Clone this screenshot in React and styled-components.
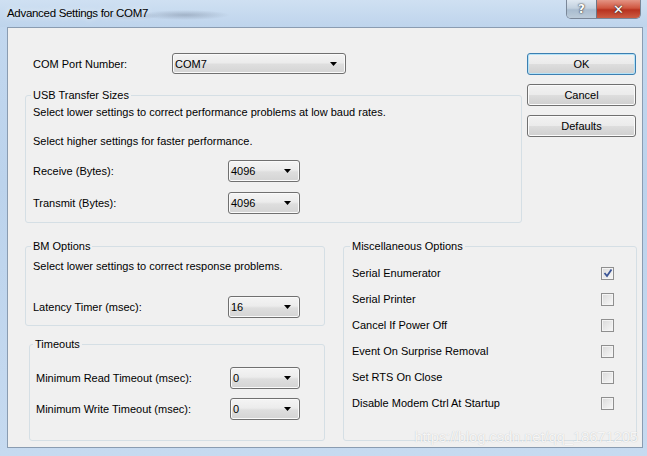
import React from 'react';
import styled, { createGlobalStyle } from 'styled-components';

const GlobalStyle = createGlobalStyle`
  html, body {
    margin: 0;
    padding: 0;
    background: #bdd3ec;
  }
  body {
    font-family: "Liberation Sans", Arial, sans-serif;
    font-size: 11px;
    color: #000;
  }
`;

const Window = styled.div`
  width: 647px;
  height: 456px;
  display: flex;
  flex-direction: column;
  background: linear-gradient(180deg, #c3d8ef 0%, #bcd3ec 40%, #c6daf0 100%);
  overflow: hidden;
`;

const TitleBar = styled.div`
  height: 27px;
  flex: none;
  display: flex;
  align-items: flex-start;
  background:
    radial-gradient(ellipse 45px 5px at 185px 15px, rgba(80, 90, 110, 0.3), transparent),
    radial-gradient(ellipse 30px 4px at 130px 16px, rgba(80, 90, 110, 0.2), transparent),
    linear-gradient(180deg, #cfe0f2 0%, #bed4ec 100%);
`;

const Title = styled.div`
  padding: 6px 0 0 7px;
  font-size: 11.5px;
  letter-spacing: -0.3px;
  line-height: 14px;
  text-shadow: 0 0 6px rgba(255, 255, 255, 0.9);
`;

const CaptionButtons = styled.div`
  margin-left: auto;
  margin-right: 6px;
  display: flex;
  border: 1px solid #7a8798;
  border-top: none;
  border-radius: 0 0 5px 5px;
  overflow: hidden;
`;

const CaptionButton = styled.div`
  width: ${({ $w }) => $w}px;
  height: 18px;
  display: flex;
  align-items: center;
  justify-content: center;
  font-family: "DejaVu Sans", sans-serif;
  font-weight: bold;
  font-size: ${({ $close }) => ($close ? 13 : 12)}px;
  color: #fff;
  text-shadow: 0 0 1px #333, 0 0 2px #333;
  background: ${({ $close }) =>
    $close
      ? 'linear-gradient(180deg, #e49484 0%, #cf5640 45%, #b8321f 55%, #cc5d43 100%)'
      : 'linear-gradient(180deg, #dfe8f1 0%, #c3d1df 45%, #a9bccf 55%, #bccbd9 100%)'};
  & + & {
    border-left: 1px solid #6c7686;
  }
`;

const Client = styled.div`
  position: relative;
  flex: 1;
  margin: 0 4px 8px 7px;
  border: 1px solid #8a9cb1;
  background: #f0f0f0;
  padding: 25px 0 0 17px;
  display: flex;
  flex-direction: column;
`;

const TopSection = styled.div`
  display: flex;
  align-items: flex-start;
`;

const LeftColumn = styled.div`
  width: ${({ $w }) => $w}px;
  display: flex;
  flex-direction: column;
`;

const ButtonColumn = styled.div`
  margin-left: 5px;
  display: flex;
  flex-direction: column;
  gap: 9px;
`;

const Button = styled.div`
  width: 109px;
  height: 22px;
  box-sizing: border-box;
  border: 1px solid ${({ $default }) => ($default ? '#3c7fb1' : '#707070')};
  border-radius: 3px;
  display: flex;
  align-items: center;
  justify-content: center;
  background: linear-gradient(180deg, #f2f2f2 0%, #ebebeb 48%, #dddddd 52%, #cfcfcf 100%);
  box-shadow: inset 0 0 0 1px ${({ $default }) => ($default ? '#b4e2f7' : '#fbfbfb')};
`;

const FieldRow = styled.div`
  display: flex;
  align-items: center;
  height: ${({ $h }) => $h || 22}px;
  margin-top: ${({ $mt }) => $mt || 0}px;
  padding-left: ${({ $pl }) => $pl || 0}px;
`;

const FieldLabel = styled.span`
  width: ${({ $w }) => $w}px;
  flex: none;
`;

const Select = styled.div`
  width: ${({ $w }) => $w}px;
  height: ${({ $h }) => $h || 22}px;
  box-sizing: border-box;
  border: 1px solid #707070;
  border-radius: 3px;
  padding: 0 8px 0 2px;
  display: flex;
  align-items: center;
  justify-content: space-between;
  background: linear-gradient(180deg, #f4f4f4 0%, #ececec 45%, #dedede 55%, #d4d4d4 100%);
  box-shadow: inset 0 0 0 1px #fafafa;
`;

const Group = styled.fieldset`
  margin: ${({ $m }) => $m || '0'};
  width: ${({ $w }) => $w}px;
  box-sizing: border-box;
  border: 1px solid #d5dfe5;
  border-radius: 3px;
  padding: ${({ $p }) => $p};
  display: flex;
  flex-direction: column;
`;

const Legend = styled.legend`
  padding: 0 2px;
  margin-left: ${({ $ml }) => $ml ?? -2}px;
  line-height: 14px;
`;

const Text = styled.div`
  line-height: 14px;
  margin-top: ${({ $mt }) => $mt || 0}px;
`;

const BottomSection = styled.div`
  margin-top: 16px;
  display: flex;
  align-items: flex-start;
`;

const OptionRow = styled.div`
  height: 26px;
  display: flex;
  align-items: center;
  justify-content: space-between;
`;

const CheckBox = styled.div`
  width: 13px;
  height: 13px;
  box-sizing: border-box;
  border: 1px solid #8f8f8f;
  display: flex;
  align-items: center;
  justify-content: center;
  background: linear-gradient(135deg, #d9d9d9 0%, #ececec 60%, #f8f8f8 100%);
  box-shadow: inset 0 0 0 1px #f4f4f4;
`;

const Watermark = styled.div`
  position: absolute;
  right: 4px;
  bottom: 2px;
  font-size: 15px;
  color: rgba(255, 255, 255, 0.85);
  text-shadow: 0 0 1px rgba(0, 0, 0, 0.22);
  letter-spacing: -0.2px;
`;

function Arrow() {
  return (
    <svg width="7" height="4" viewBox="0 0 7 4">
      <path d="M0 0 H7 L3.5 4 Z" fill="#000" />
    </svg>
  );
}

function DropDown({ value, width, height }) {
  return (
    <Select $w={width} $h={height}>
      <span>{value}</span>
      <Arrow />
    </Select>
  );
}

function Check({ checked }) {
  return (
    <CheckBox>
      {checked && (
        <svg width="10" height="10" viewBox="0 0 10 10">
          <path d="M1.5 5 L4 8 L8.5 1.5" fill="none" stroke="#3b5596" strokeWidth="1.8" />
        </svg>
      )}
    </CheckBox>
  );
}

const options = [
  { label: 'Serial Enumerator', checked: true },
  { label: 'Serial Printer' },
  { label: 'Cancel If Power Off' },
  { label: 'Event On Surprise Removal' },
  { label: 'Set RTS On Close' },
  { label: 'Disable Modem Ctrl At Startup' },
];

export default function App() {
  return (
    <>
      <GlobalStyle />
      <Window>
        <TitleBar>
          <Title>Advanced Settings for COM7</Title>
          <CaptionButtons>
            <CaptionButton $w={29}>?</CaptionButton>
            <CaptionButton $w={43} $close>✕</CaptionButton>
          </CaptionButtons>
        </TitleBar>

        <Client>
          <TopSection>
            <LeftColumn $w={497}>
              <FieldRow $h={21} $pl={8}>
                <FieldLabel $w={139}>COM Port Number:</FieldLabel>
                <DropDown value="COM7" width={174} height={21} />
              </FieldRow>

              <Group $w={497} $m="14px 0 0 0" $p="3px 10px 8px 7px">
                <Legend>USB Transfer Sizes</Legend>
                <Text>Select lower settings to correct performance problems at low baud rates.</Text>
                <Text $mt={15}>Select higher settings for faster performance.</Text>
                <FieldRow $mt={12}>
                  <FieldLabel $w={195}>Receive (Bytes):</FieldLabel>
                  <DropDown value="4096" width={72} />
                </FieldRow>
                <FieldRow $mt={10}>
                  <FieldLabel $w={195}>Transmit (Bytes):</FieldLabel>
                  <DropDown value="4096" width={72} />
                </FieldRow>
              </Group>
            </LeftColumn>

            <ButtonColumn>
              <Button $default>OK</Button>
              <Button>Cancel</Button>
              <Button>Defaults</Button>
            </ButtonColumn>
          </TopSection>

          <BottomSection>
            <LeftColumn $w={300}>
              <Group $w={300} $p="6px 10px 7px 7px">
                <Legend>BM Options</Legend>
                <Text>Select lower settings to correct response problems.</Text>
                <FieldRow $mt={23}>
                  <FieldLabel $w={195}>Latency Timer (msec):</FieldLabel>
                  <DropDown value="16" width={72} />
                </FieldRow>
              </Group>

              <Group $w={296} $m="11px 0 0 4px" $p="16px 10px 20px 6px">
                <Legend $ml={-3}>Timeouts</Legend>
                <FieldRow>
                  <FieldLabel $w={194}>Minimum Read Timeout (msec):</FieldLabel>
                  <DropDown value="0" width={70} />
                </FieldRow>
                <FieldRow $mt={9}>
                  <FieldLabel $w={194}>Minimum Write Timeout (msec):</FieldLabel>
                  <DropDown value="0" width={70} />
                </FieldRow>
              </Group>
            </LeftColumn>

            <Group $w={294} $m="0 0 0 18px" $p="7px 22px 24px 8px">
              <Legend>Miscellaneous Options</Legend>
              {options.map((o) => (
                <OptionRow key={o.label}>
                  <span>{o.label}</span>
                  <Check checked={o.checked} />
                </OptionRow>
              ))}
            </Group>
          </BottomSection>

          <Watermark>https://blog.csdn.net/qq_18671205</Watermark>
        </Client>
      </Window>
    </>
  );
}
